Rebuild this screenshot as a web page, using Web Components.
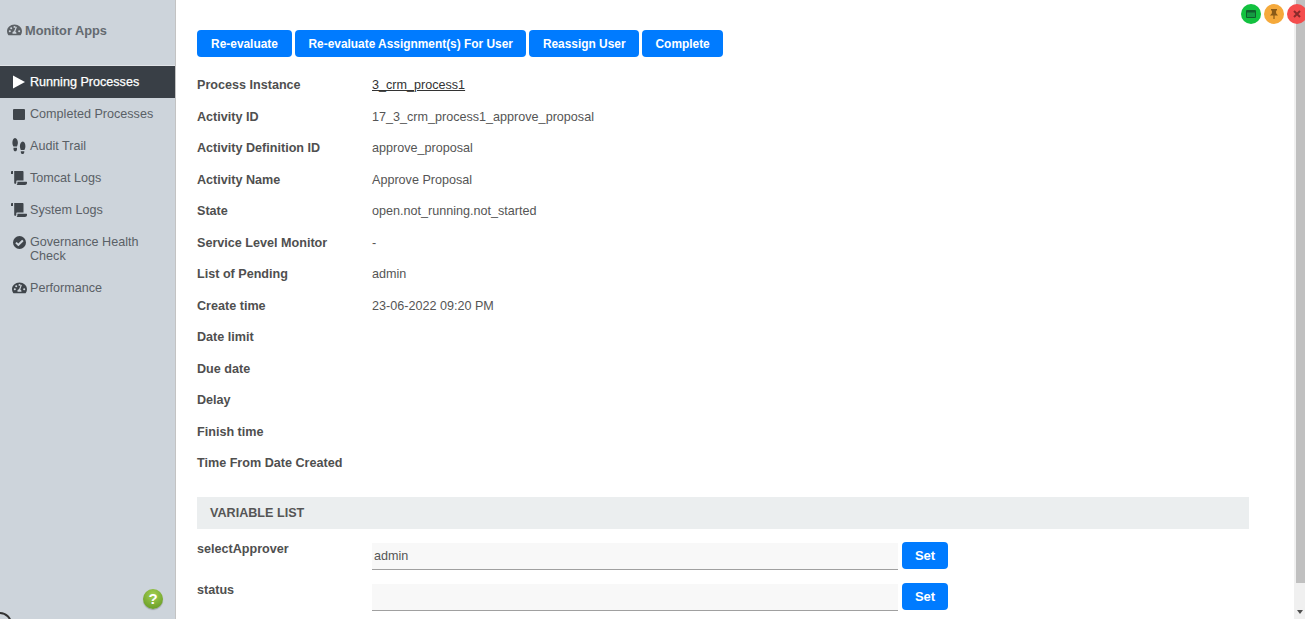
<!DOCTYPE html>
<html>
<head>
<meta charset="utf-8">
<title>Monitor Apps</title>
<style>
    html, body { margin: 0; height: 100%; overflow: hidden; }
    body { font-family: "Liberation Sans", Arial, sans-serif; font-size: 13px; color: #4d4d4d; }
</style>
</head>
<body>

<template id="tpl-shell">
    <style>
        :host { display: flex; height: 619px; width: 1305px; position: relative; overflow: hidden; background: #fff; }
        .main { flex: 1; min-width: 0; }
        .scrollbar { width: 11px; background: #f0f0f0; display: flex; flex-direction: column; align-items: flex-end; }
        .thumb { width: 9px; height: 583px; background: #c0c0c0; }
        .arrow { margin-top: auto; margin-bottom: 5px; margin-right: 2px; width: 0; height: 0; border-left: 3px solid transparent; border-right: 3px solid transparent; border-top: 4px solid #505050; }
        ::slotted(win-controls) { position: absolute; top: 4px; right: -2px; }
    </style>
    <slot name="side"></slot>
    <div class="main"><slot></slot></div>
    <div class="scrollbar"><div class="thumb"></div><div class="arrow"></div></div>
    <slot name="controls"></slot>
</template>

<template id="tpl-sidebar">
    <style>
        :host { display: flex; flex-direction: column; width: 175px; flex: none; height: 100%; background: #cdd4db; border-right: 1px solid #c3c3c3; position: relative; overflow: hidden; }
        .brand { height: 66px; box-sizing: border-box; padding: 23px 0 0 7px; font-size: 12.8px; font-weight: bold; color: #646a70; display: flex; align-items: flex-start; gap: 3px; line-height: 15px; border-bottom: 1px solid #e1e4e8; }
        .brand svg { display: block; fill: #5c6166; margin-top: 1px; }
        nav { display: flex; flex-direction: column; }
        .help { position: absolute; left: 143px; top: 589px; width: 20px; height: 20px; border-radius: 50%; background: radial-gradient(circle at 50% 30%, #a4cf53, #6b9f28 80%); color: #fff; font: bold 15px/20px "Liberation Sans", sans-serif; text-align: center; box-shadow: 0 1px 1px rgba(0,0,0,.25); }
        .corner { position: absolute; left: -12px; top: 612px; width: 24px; height: 24px; border: 2px solid #333; border-radius: 50%; box-sizing: border-box; }
    </style>
    <div class="brand"><span id="logo"></span><span>Monitor Apps</span></div>
    <nav><slot></slot></nav>
    <div class="help">?</div>
    <div class="corner"></div>
</template>

<template id="tpl-nav-item">
    <style>
        :host { display: flex; padding: 9px 8px 9px 11px; gap: 3px; font-size: 12.6px; line-height: 14px; color: #5a6066; }
        :host([active]) { background: #393f46; color: #fff; -webkit-text-stroke: .25px #fff; }
        .ic { width: 16px; height: 14px; flex: none; display: flex; justify-content: center; align-items: center; }
        svg { fill: #3f454b; flex: none; }
        :host([active]) svg { fill: #fff; }
    </style>
    <span class="ic" id="ic"></span><span><slot></slot></span>
</template>

<template id="tpl-action-btn">
    <style>
        :host { display: inline-flex; align-items: center; justify-content: center; background: #007bff; color: #fff; height: 27px; padding: 0 13.5px; border-radius: 4px; font-size: 11.9px; font-weight: bold; white-space: nowrap; box-sizing: border-box; }
    </style>
    <slot></slot>
</template>

<template id="tpl-detail-row">
    <style>
        :host { display: grid; grid-template-columns: 175px 1fr; height: 31.5px; align-items: center; font-size: 12.6px; line-height: 14px; }
        .k { font-weight: bold; color: #4f4f4f; }
        .v { color: #555; }
    </style>
    <span class="k" id="k"></span><span class="v"><slot></slot></span>
</template>

<template id="tpl-var-row">
    <style>
        :host { display: grid; grid-template-columns: 175px 526px 50px; align-items: start; height: 41px; font-size: 12.6px; }
        .k { font-weight: bold; color: #4f4f4f; line-height: 14px; }
        .in { height: 27px; box-sizing: border-box; background: #f8f8f8; border-bottom: 1px solid #a0a0a0; padding: 0 2px; line-height: 26px; color: #555; margin-top: 1px; }
        action-btn { margin-left: 4px; padding: 0; width: 46px; font-size: 13px; }
    </style>
    <span class="k" id="k"></span><div class="in" id="in"></div><action-btn>Set</action-btn>
</template>

<template id="tpl-win-controls">
    <style>
        :host { display: flex; gap: 3px; width: 66px; }
        span { width: 20px; height: 20px; border-radius: 50%; display: flex; align-items: center; justify-content: center; flex: none; }
        .g { background: #12c13f; } .o { background: #f5a93b; } .r { background: #f44d4d; }
        svg { width: 10px; height: 10px; }
    </style>
    <span class="g"><svg viewBox="0 0 10 10"><rect y="1" width="10" height="8" rx="1" fill="#0e5f2c"/><rect x="1" y="3.5" width="8" height="4.5" fill="#149a42"/></svg></span>
    <span class="o"><svg viewBox="0 0 10 10"><path d="M2 0h6v1.200l-.9.5v2.600L9 6.500H5.600V10H4.400V6.500H1l1.900-2.200V1.700L2 1.200z" fill="#8a5a17"/></svg></span>
    <span class="r"><svg viewBox="0 0 10 10"><path d="M2 2l6 6M8 2l-6 6" stroke="#8a2a2a" stroke-width="2"/></svg></span>
</template>

<template id="tpl-section">
    <style>
        :host { display: flex; align-items: center; height: 32px; background: #ebeeef; padding-left: 13px; width: 1052px; box-sizing: border-box; font-size: 12.6px; font-weight: bold; color: #555; margin: 17.5px 0 13px; }
    </style>
    <slot></slot>
</template>

<template id="tpl-process-view">
    <style>
        :host { display: block; padding: 30px 0 0 21px; }
        .actions { display: flex; gap: 3px; margin-bottom: 12.5px; }
    </style>
    <div class="actions"><slot name="actions"></slot></div>
    <slot></slot>
</template>

<script>
    // use href can't reach across shadow roots, so each icon is inlined
    // [viewBox, width, height, shapes]
    const ICONS = {
        gauge: ['0 0 16 14', 15, 12, '<path fill-rule="evenodd" d="M8 .5C3.6.5 0 4 0 8.400c0 1.600.5 3 1.300 4.300.2.300.5.400.8.400h11.800c.3 0 .6-.1.8-.4.8-1.300 1.300-2.700 1.300-4.300C16 4 12.400.5 8 .5zM8 2.300a1.100 1.100 0 1 1 0 2.200 1.100 1.100 0 0 1 0-2.200zM3 9.600a1.100 1.100 0 1 1 0-2.200 1.100 1.100 0 0 1 0 2.200zM4.500 6a1.100 1.100 0 1 1 0-2.200 1.100 1.100 0 0 1 0 2.200zM9.900 11.400H6.100c-.2-.3-.3-.6-.3-1 0-1 .8-1.700 1.700-1.800l1.700-4.900c.1-.4.5-.5.8-.4.4.1.5.5.4.8L8.800 8.800c.8.4 1.300 1 1.300 1.700 0 .3-.1.6-.2.900zM13 9.600a1.100 1.100 0 1 1 0-2.200 1.100 1.100 0 0 1 0 2.200z"/>'],
        play: ['0 0 12 14', 12, 14, '<path d="M0 .5 12 7 0 13.500z"/>'],
        stop: ['0 0 12 12', 12, 11, '<rect width="12" height="12" rx="1"/>'],
        shoes: ['0 0 14 14', 14, 16, '<path d="M3 0C1.300 0 .4 2 .4 4.200c0 1.500.6 2.400 1 3.300h3.600c.3-1 .9-1.900.9-3.300C5.900 2 4.700 0 3 0zM1.500 8.500v1.300c0 1.100.8 1.800 1.800 1.800s1.700-.8 1.700-1.800V8.500zM10.800 3C9.100 3 7.900 5 7.900 7.200c0 1.400.6 2.300.9 3.300h3.600c.4-.9 1-1.800 1-3.300C13.400 5 12.500 3 10.800 3zM8.800 11.500v.7c0 1 .7 1.800 1.700 1.800s1.800-.7 1.800-1.800v-.7z"/>'],
        scroll: ['0 0 16 14', 16, 14, '<path d="M0 .8C0 .3.4 0 .9 0H2v3H0zM3.200 0h8.300c.6 0 1 .4 1 1v8.500H6.300c-.6 0-1 .4-1 1v1.300c0 .7-.5 1.200-1.100 1.200-.6 0-1-.5-1-1.200z"/><path d="M6.400 10.700h9.100c.3 0 .5.200.5.500v.8c0 1.100-.9 2-2 2H5.500c.6-.4.900-1.100.9-2z"/>'],
        check: ['0 0 14 14', 13, 13, '<path fill-rule="evenodd" d="M7 0a7 7 0 1 1 0 14A7 7 0 0 1 7 0zm4.100 5.200-.9-.9a.5.5 0 0 0-.7 0L5.700 8 4.300 6.600a.5.5 0 0 0-.7 0l-.9.9a.5.5 0 0 0 0 .7l2.700 2.700c.2.200.5.200.7 0l5-5a.5.5 0 0 0 0-.7z"/>']
    };
    function iconSvg(name) {
        const [box, w, h, body] = ICONS[name];
        return `<svg viewBox="${box}" width="${w}" height="${h}" preserveAspectRatio="none">${body}</svg>`;
    }

    // every element just clones its own template
    function register(tag, tplId, setup) {
        customElements.define(tag, class extends HTMLElement {
            constructor() {
                super();
                this.attachShadow({ mode: 'open' });
                this.shadowRoot.appendChild(document.getElementById(tplId).content.cloneNode(true));
            }
            connectedCallback() {
                if (setup) setup(this, this.shadowRoot);
            }
        });
    }

    register('app-shell', 'tpl-shell');
    register('side-bar', 'tpl-sidebar', (el, root) => {
        root.getElementById('logo').innerHTML = iconSvg('gauge');
    });
    register('nav-item', 'tpl-nav-item', (el, root) => {
        root.getElementById('ic').innerHTML = iconSvg(el.getAttribute('icon'));
    });
    register('action-btn', 'tpl-action-btn');
    register('detail-row', 'tpl-detail-row', (el, root) => {
        root.getElementById('k').textContent = el.getAttribute('label');
    });
    register('var-row', 'tpl-var-row', (el, root) => {
        root.getElementById('k').textContent = el.getAttribute('label');
        root.getElementById('in').textContent = el.getAttribute('value') || '';
    });
    register('win-controls', 'tpl-win-controls');
    register('section-head', 'tpl-section');
    register('process-view', 'tpl-process-view');
</script>

<app-shell>
    <side-bar slot="side">
        <nav-item icon="play" active>Running Processes</nav-item>
        <nav-item icon="stop">Completed Processes</nav-item>
        <nav-item icon="shoes">Audit Trail</nav-item>
        <nav-item icon="scroll">Tomcat Logs</nav-item>
        <nav-item icon="scroll">System Logs</nav-item>
        <nav-item icon="check">Governance Health Check</nav-item>
        <nav-item icon="gauge">Performance</nav-item>
    </side-bar>

    <process-view>
        <action-btn slot="actions" style="width:95px;padding:0">Re-evaluate</action-btn>
        <action-btn slot="actions">Re-evaluate Assignment(s) For User</action-btn>
        <action-btn slot="actions">Reassign User</action-btn>
        <action-btn slot="actions">Complete</action-btn>

        <detail-row label="Process Instance"><a style="color:#333;text-decoration:underline" href="#">3_crm_process1</a></detail-row>
        <detail-row label="Activity ID">17_3_crm_process1_approve_proposal</detail-row>
        <detail-row label="Activity Definition ID">approve_proposal</detail-row>
        <detail-row label="Activity Name">Approve Proposal</detail-row>
        <detail-row label="State">open.not_running.not_started</detail-row>
        <detail-row label="Service Level Monitor">-</detail-row>
        <detail-row label="List of Pending">admin</detail-row>
        <detail-row label="Create time">23-06-2022 09:20 PM</detail-row>
        <detail-row label="Date limit"></detail-row>
        <detail-row label="Due date"></detail-row>
        <detail-row label="Delay"></detail-row>
        <detail-row label="Finish time"></detail-row>
        <detail-row label="Time From Date Created"></detail-row>

        <section-head>VARIABLE LIST</section-head>
        <var-row label="selectApprover" value="admin"></var-row>
        <var-row label="status"></var-row>
    </process-view>

    <win-controls slot="controls"></win-controls>
</app-shell>

</body>
</html>
